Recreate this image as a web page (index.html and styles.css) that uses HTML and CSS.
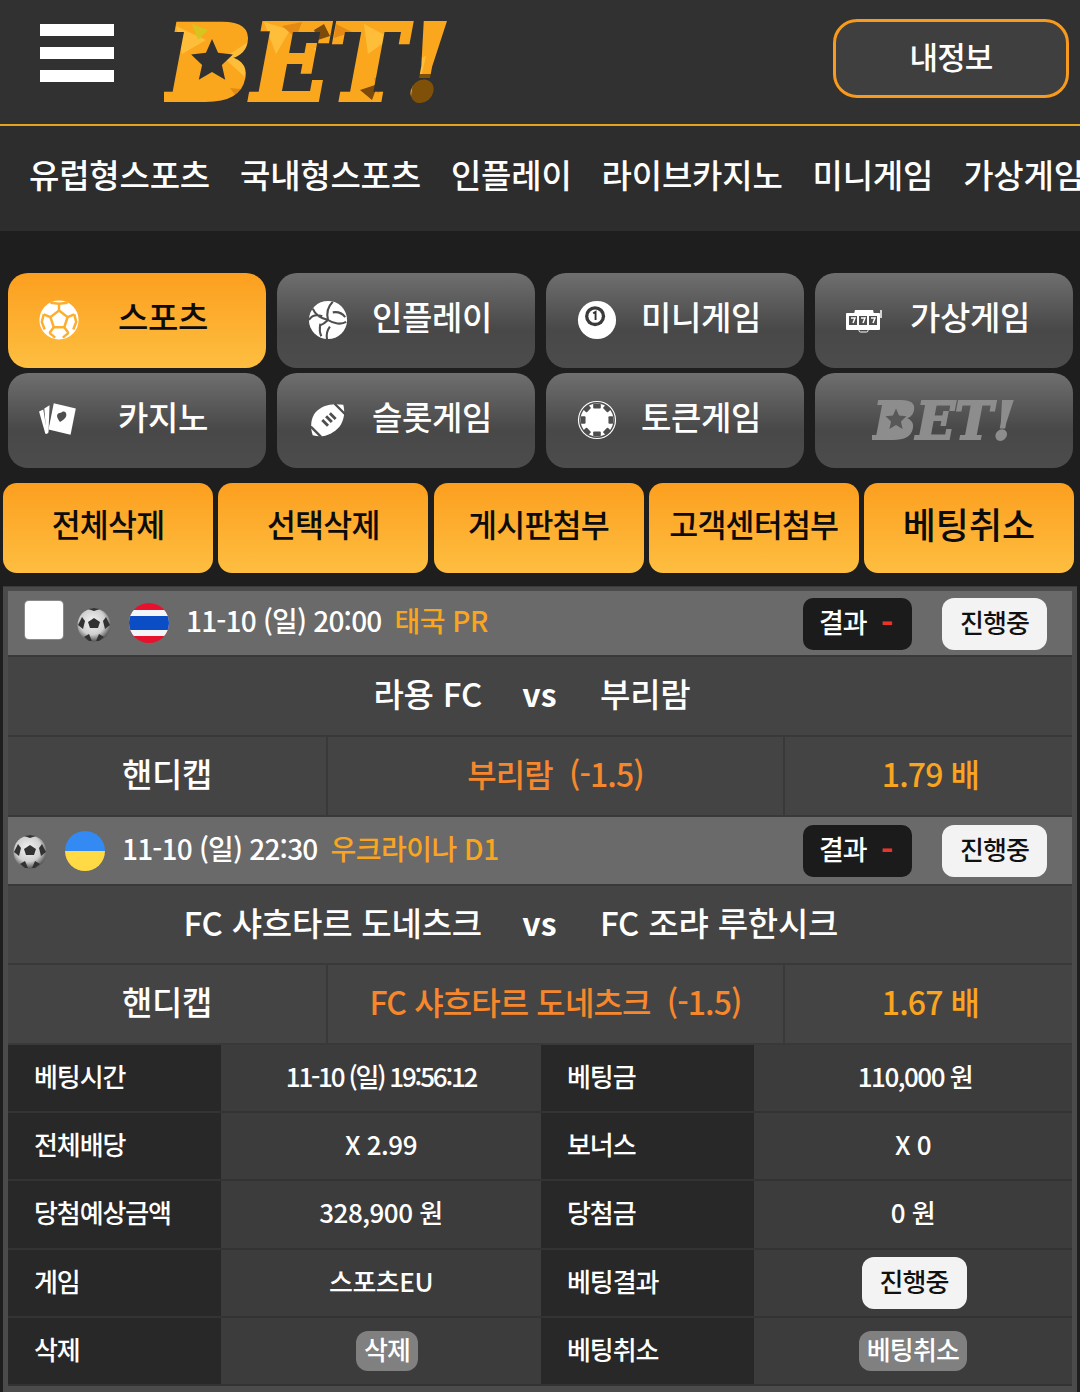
FILE: index.html
```html
<!DOCTYPE html>
<html lang="ko">
<head>
<meta charset="utf-8">
<title>BET</title>
<link rel="stylesheet" href="styles.css">
</head>
<body>
<svg class="defs" width="0" height="0">
  <defs>
    <radialGradient id="ballg" cx="45%" cy="40%" r="60%"><stop offset="0" stop-color="#f4f4f4"/><stop offset=".65" stop-color="#cfcfcf"/><stop offset="1" stop-color="#555"/></radialGradient>
    <filter id="soft"><feGaussianBlur stdDeviation=".7"/></filter>
    <pattern id="flame" patternUnits="userSpaceOnUse" width="310" height="90">
      <rect width="310" height="90" fill="#fba71e"/>
      <path d="M12 8l30 14-24 14zM60 40l30-20-8 40zM100 4l26 8-14 24zM150 30l36 6-26 26zM200 6l26 14-22 16zM232 50l30-12-8 34z" fill="#ffbe3a"/>
      <path d="M28 6l16 6-10 10z" fill="#d8c41f"/>
      <path d="M118 8l20-4-6 16zM172 6l16 8-18 6zM210 60l14-4-10 20zM66 70l22 2-12 12z" fill="#e48a14"/>
      <path d="M150 12l10-6 6 12-12 4zM196 72l18-6-6 16z" fill="#7c4a0a"/>
      <path d="M250 56h30v30h-34z" fill="#7f5108"/>
    </pattern>
    <symbol id="ball3d" viewBox="0 0 34 34">
      <circle cx="17" cy="17" r="16.500" fill="url(#ballg)"/>
      <g filter="url(#soft)" fill="#333">
        <path d="M17 10l6 4-2 6h-8l-2-6z"/>
        <path d="M1 17l4-8 3 4-2 8zM33 17l-4-8-3 4 2 8zM11 1l6 2 6-2-6-1zM7 29l5-3 3 7-3 0zM27 29l-5-3-3 7 3 0z"/>
      </g>
    </symbol>
    <symbol id="star" viewBox="0 0 40 40"><path d="M20 1l5.500 12.500L39 15l-10 9.500L32 38l-12-7-12 7 3-13.500L1 15l13.500-1.500z"/></symbol>
  </defs>
</svg>

<header class="top">
  <div class="burger"><i></i><i></i><i></i></div>
  <svg class="logo" viewBox="0 -20 310 130">
    <text class="logo-text" x="2" y="82" textLength="284" lengthAdjust="spacingAndGlyphs" fill="url(#flame)" stroke="url(#flame)" stroke-width="4">BET!</text>
    <path d="M22 10h44l-6 64H14z" fill="url(#flame)"/>
    <use href="#star" x="26" y="20" width="44" height="44" fill="#313131"/>
  </svg>
  <button class="myinfo">내정보</button>
</header>

<nav class="menu">
  <span>유럽형스포츠</span><span>국내형스포츠</span><span>인플레이</span><span>라이브카지노</span><span>미니게임</span><span>가상게임</span>
</nav>

<section class="cats">
  <a class="cat on">
    <svg class="ic" viewBox="0 0 44 44"><circle cx="22" cy="22" r="20.500" fill="#fff"/><g fill="none" stroke="#fdae2e" stroke-width="2.600"><path d="M22 12l9 7-3.500 10.500h-11L13 19z"/><path d="M22 12V5M31 19l7-3M27.500 29.500l4.500 6M16.500 29.500L12 35.500M13 19l-7-3"/><path d="M13 4l9 1 9-1M38 16l2 8 -3 8M32 35.500l-6 5M12 35.500l6 5M6 16l-2 8 3 8"/></g></svg>
    <span>스포츠</span>
  </a>
  <a class="cat">
    <svg class="ic" viewBox="0 0 44 44"><circle cx="22" cy="22" r="20" fill="#fff"/><path d="M22 22C20 14 22 8 27 3M22 22C14 20 8 15 6 10M22 22c6 4 14 5 19 2M16 18C10 16 5 17 2 22M27 14c6-1 10 1 13 5M24 29c-3 4-4 8-3 13M14 26c-1 5-1 9 1 13M22 22c-3 3-6 5-9 6" fill="none" stroke="#4e4e4e" stroke-width="2.200"/></svg>
    <span>인플레이</span>
  </a>
  <a class="cat">
    <svg class="ic" viewBox="0 0 44 44"><circle cx="22" cy="22" r="20" fill="#fff"/><circle cx="20" cy="18" r="10.500" fill="#3a3a3a"/><circle cx="20" cy="18" r="7" fill="#fff"/><path d="M18 15l2.500-1.500V22" fill="none" stroke="#333" stroke-width="2"/></svg>
    <span>미니게임</span>
  </a>
  <a class="cat">
    <svg class="ic slot" viewBox="0 0 38 26"><path d="M10 3h18l1 4H9z" fill="#fff"/><rect x="1" y="6" width="34" height="17" rx="1" fill="#fff"/><path d="M36 3v8" stroke="#fff" stroke-width="1.500"/><rect x="14" y="22" width="9" height="3" rx="1.500" fill="none" stroke="#fff"/><g fill="#4e4e4e"><rect x="4" y="9" width="8" height="9"/><rect x="14" y="9" width="8" height="9"/><rect x="24" y="9" width="8" height="9"/></g><path d="M6 11h4l-2 5M16 11h4l-2 5M26 11h4l-2 5" fill="none" stroke="#fff" stroke-width="1.500"/></svg>
    <span>가상게임</span>
  </a>
  <a class="cat">
    <svg class="ic" viewBox="0 0 40 34"><path d="M1 9l4-2 4 23-2 0z" fill="#fff"/><path d="M6 6l5-3-1 26-2 1z" fill="#fff"/><path d="M15 1l21 5-5 25-21-5z" fill="#fff"/><path d="M22 10c2-2 5-1 5 2 0 3-3 5-6 7-2-3-4-6-2-8 1-1 2-1 3-1z" fill="#4e4e4e"/></svg>
    <span>카지노</span>
  </a>
  <a class="cat">
    <svg class="ic" viewBox="0 0 44 44"><path d="M38 6c-13-2-23 1-29 8C4 20 3 30 6 38c11 3 21-1 28-9 5-7 6-15 4-23z" fill="#fff"/><path d="M4 29l11 11M29 5l11 11" stroke="#4e4e4e" stroke-width="2.500"/><path d="M16 22l6 6M20 18l6 6M24 15l6 6" stroke="#4e4e4e" stroke-width="3"/></svg>
    <span>슬롯게임</span>
  </a>
  <a class="cat">
    <svg class="ic" viewBox="0 0 44 44"><circle cx="22" cy="22" r="20" fill="#fff"/><circle cx="22" cy="22" r="18" fill="none" stroke="#4e4e4e" stroke-width="1.500"/><g fill="#4e4e4e"><rect x="18" y="5" width="8" height="5" rx="1"/><rect x="18" y="34" width="8" height="5" rx="1"/><rect x="5" y="18" width="5" height="8" rx="1"/><rect x="34" y="18" width="5" height="8" rx="1"/><rect x="8" y="8" width="7" height="5" rx="1" transform="rotate(-45 11 10)"/><rect x="29" y="8" width="7" height="5" rx="1" transform="rotate(45 33 10)"/><rect x="8" y="31" width="7" height="5" rx="1" transform="rotate(45 11 34)"/><rect x="29" y="31" width="7" height="5" rx="1" transform="rotate(-45 33 34)"/></g></svg>
    <span>토큰게임</span>
  </a>
  <a class="cat brand">
    <svg class="logo-grey" viewBox="0 -20 310 130">
      <text class="logo-text" x="2" y="82" textLength="284" lengthAdjust="spacingAndGlyphs" fill="#8d8d8d" stroke="#8d8d8d" stroke-width="4">BET!</text>
      <path d="M22 10h44l-6 64H14z" fill="#8d8d8d"/>
      <use href="#star" x="26" y="20" width="44" height="44" fill="#585858"/>
    </svg>
  </a>
</section>

<section class="actions">
  <button>전체삭제</button><button>선택삭제</button><button>게시판첨부</button><button>고객센터첨부</button><button class="big">베팅취소</button>
</section>

<main class="panel">
  <div class="gamehead">
    <div class="meta">
      <span class="check"></span>
      <svg class="ball"><use href="#ball3d"/></svg>
      <svg class="flag" viewBox="0 0 40 40"><defs><clipPath id="c1"><circle cx="20" cy="20" r="20"/></clipPath></defs><g clip-path="url(#c1)"><rect width="40" height="40" fill="#e8112d"/><rect y="7" width="40" height="26" fill="#f4f5f8"/><rect y="13" width="40" height="14" fill="#0a4dc4"/></g></svg>
      <span class="when">11-10 (일) 20:00</span><span class="league">태국 PR</span>
    </div>
    <div class="result">결과 <b>-</b></div>
    <div class="pill">진행중</div>
  </div>
  <div class="teams"><span class="home">라용 FC</span><span class="vs">vs</span><span class="away">부리람</span></div>
  <div class="pick"><div class="p1">핸디캡</div><div class="p2">부리람 &nbsp;(-1.5)</div><div class="p3">1.79 배</div></div>

  <div class="gamehead second">
    <div class="meta nocheck">
      <svg class="ball"><use href="#ball3d"/></svg>
      <svg class="flag" viewBox="0 0 40 40"><defs><clipPath id="c2"><circle cx="20" cy="20" r="20"/></clipPath></defs><g clip-path="url(#c2)"><rect width="40" height="20" fill="#338af3"/><rect y="20" width="40" height="20" fill="#ffda44"/></g></svg>
      <span class="when">11-10 (일) 22:30</span><span class="league">우크라이나 D1</span>
    </div>
    <div class="result">결과 <b>-</b></div>
    <div class="pill">진행중</div>
  </div>
  <div class="teams short"><span class="home">FC 샤흐타르 도네츠크</span><span class="vs">vs</span><span class="away">FC 조랴 루한시크</span></div>
  <div class="pick"><div class="p1">핸디캡</div><div class="p2">FC 샤흐타르 도네츠크 &nbsp;(-1.5)</div><div class="p3">1.67 배</div></div>

  <div class="info">
    <div class="k">베팅시간</div><div class="v stamp">11-10 (일) 19:56:12</div><div class="k">베팅금</div><div class="v tight">110,000 원</div>
    <div class="k">전체배당</div><div class="v">X 2.99</div><div class="k">보너스</div><div class="v">X 0</div>
    <div class="k">당첨예상금액</div><div class="v">328,900 원</div><div class="k">당첨금</div><div class="v">0 원</div>
    <div class="k">게임</div><div class="v">스포츠EU</div><div class="k">베팅결과</div><div class="v btncell"><span class="pill small">진행중</span></div>
    <div class="k">삭제</div><div class="v btncell"><span class="gbtn shifted">삭제</span></div><div class="k">베팅취소</div><div class="v btncell"><span class="gbtn">베팅취소</span></div>
  </div>
</main>
</body>
</html>
```

FILE: styles.css
```css
* { box-sizing: border-box; }
html, body { margin: 0; padding: 0; }
body {
  width: 1080px; height: 1392px; overflow: hidden;
  background: #1e1e1e; color: #fff; font-weight: 500;
  font-family: "Noto Sans CJK KR", "Noto Sans", sans-serif;
}
.defs { position: absolute; }
button { font-family: inherit; font-weight: 500; border: 0; cursor: pointer; }

.top {
  height: 126px; background: #313131; border-bottom: 2px solid #e5a31f;
  display: flex; align-items: flex-start; position: relative;
}
.burger { margin: 24px 0 0 40px; width: 74px; display: flex; flex-direction: column; gap: 11px; }
.burger i { display: block; height: 12px; background: #fff; }
.logo { margin: -2px 0 0 50px; width: 310px; height: 130px; flex: none; }
.logo-text {
  font-family: "DejaVu Serif", serif; font-weight: 700; font-style: italic; font-size: 104px;
}
.myinfo {
  position: absolute; left: 833px; top: 19px; width: 236px; height: 79px;
  background: #3f3f3f; border: 3px solid #f79a1e; border-radius: 24px;
  color: #fff; font-size: 31px; letter-spacing: -.8px; padding: 0 0 6px;
}

.menu {
  height: 105px; background: #2d2d2d; display: flex; align-items: center; gap: 30px;
  padding: 0 0 9px 29px; white-space: nowrap; overflow: hidden;
  font-size: 33px; letter-spacing: -.2px; position: relative;
}

.cats {
  margin: 42px 7px 0 8px; display: grid; grid-template-columns: repeat(4, 258px);
  column-gap: 11px; row-gap: 5px;
}
.cat {
  height: 95px; border-radius: 20px; display: flex; align-items: center; padding: 0 0 0 30px;
  background: linear-gradient(#6f6f6f, #484848 60%, #4c4c4c); color: #fff;
  font-size: 33px; letter-spacing: -.4px;
}
.cat.on { background: linear-gradient(#fc9f1f, #febe40); color: #0c0c0c; }
.cat .ic { width: 42px; height: 42px; flex: none; margin-bottom: 2px; }
.cat .ic.slot { width: 38px; margin-right: 4px; }
.cat span { flex: 1; text-align: center; padding: 0 20px 10px 0; }
.cat.brand { padding: 0; justify-content: center; }
.logo-grey { width: 155px; height: 65px; flex: none; margin-left: 11px; }

.actions { margin: 15px 6px 0 3px; display: flex; gap: 5.250px; }
.actions button {
  flex: 1; height: 90px; border-radius: 14px; color: #0c0c0c;
  background: linear-gradient(#fc9f1f, #febe40); font-size: 31.500px; letter-spacing: -.8px; padding: 0 0 10px;
}
.actions button.big { font-size: 36px; letter-spacing: 0; }

.panel {
  margin: 13px 3px 0 3px; padding: 4px 5px 0 5px; height: 806px; background: #4b4b4b;
  border-top: 1px solid #3a3a3a;
}
.gamehead {
  height: 66px; background: #6a6a6a; display: flex; align-items: center; position: relative;
  border-bottom: 2px solid #393939;
}
.gamehead.second { height: 69px; }
.second .result, .second .pill { top: 8px; }
.meta { display: flex; align-items: center; padding-left: 17px; }
.meta.nocheck { padding-left: 5px; }
.check {
  width: 38px; height: 38px; background: #fff; border-radius: 4px; margin: 0 14px 6px 0;
  box-shadow: 0 0 0 1px #8a8a8a;
}
.ball { width: 34px; height: 34px; flex: none; margin-top: 3px; }
.flag { width: 40px; height: 40px; flex: none; margin: 0 17px 0 18px; }
.when { font-size: 28px; letter-spacing: -.800px; margin-right: 13px; color: #fff; padding-bottom: 6px; }
.league { font-size: 28px; letter-spacing: -.500px; color: #f9a51f; padding-bottom: 6px; }
.result {
  position: absolute; left: 795px; top: 7px; width: 109px; height: 52px; background: #1b1b1b; border-radius: 10px;
  font-size: 27px; letter-spacing: -1px; display: flex; align-items: center; justify-content: flex-start; gap: 14px; padding: 0 0 5px 16px;
}
.result b { color: #e8352c; font-weight: 700; font-size: 34px; line-height: 1; }
.pill {
  position: absolute; left: 934px; top: 7px; width: 105px; height: 52px; background: #f3f3f3; border-radius: 12px;
  color: #111; font-size: 26px; letter-spacing: -1px; display: flex; align-items: center; justify-content: center; padding-bottom: 5px;
}
.pill.small { position: static; display: inline-flex; margin: 0 0 0 2px; }

.teams {
  height: 80px; background: #444; display: grid; grid-template-columns: 474px 36px 1fr; align-items: center;
  border-bottom: 2px solid #393939; font-size: 33px; letter-spacing: -.2px; column-gap: 41px; padding-bottom: 6px;
}
.teams.short { height: 79px; }
.teams .home { text-align: right; }
.teams .vs { text-align: center; font-size: 32px; font-weight: 700; margin-left: -3px; letter-spacing: 0; }
.pick {
  height: 80px; background: #444; display: grid; grid-template-columns: 318px 459px 1fr; align-items: center;
  border-bottom: 2px solid #393939; font-size: 32px; letter-spacing: -.9px; text-align: center;
}
.pick > div { height: 100%; display: flex; align-items: center; justify-content: center; padding-bottom: 6px; }
.pick .p1 { font-size: 33px; letter-spacing: -.4px; }
.pick .p2 { color: #f6872d; border-left: 2px solid #393939; border-right: 2px solid #393939; }
.pick .p3 { color: #f9a51f; padding-left: 4px; }

.info { display: grid; grid-template-columns: 213px 320px 213px 1fr; grid-auto-rows: 68.200px; }
.info > div { display: flex; align-items: center; border-bottom: 2px solid #333; font-size: 26px; letter-spacing: -1.100px; padding-bottom: 5px; }
.info > .btncell { padding-bottom: 0; }
.info .k { background: #282828; padding-left: 26px; }
.info .v { background: #3c3c3c; justify-content: center; letter-spacing: -.5px; }
.info .v.stamp { letter-spacing: -2.200px; }
.info .v.tight { letter-spacing: -1.500px; padding-left: 4px; }
.info .pill.small { letter-spacing: -1px; font-size: 26px; }
.gbtn {
  background: #808080; border-radius: 12px; padding: 0 8px 4px; height: 40px; display: inline-flex; align-items: center;
  font-size: 26px; letter-spacing: -.8px;
}
.gbtn.shifted { margin-left: 12px; }
```
